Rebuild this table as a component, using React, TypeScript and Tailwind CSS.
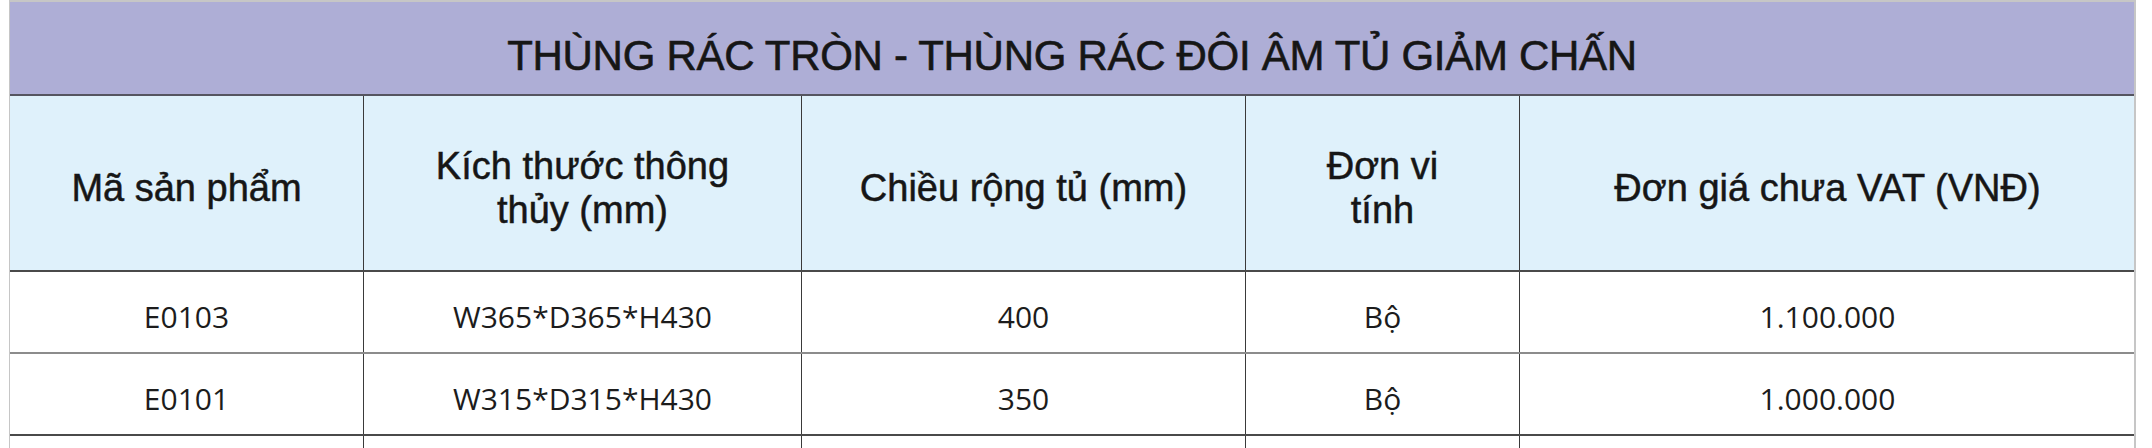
import React from "react";

const cols = "grid grid-cols-[354px_438px_444px_274px_615px]";

const rows = [
  { code: "E0103", size: "W365*D365*H430", width: "400", unit: "Bộ", price: "1.100.000", line: "border-[#8c8c8c]" },
  { code: "E0101", size: "W315*D315*H430", width: "350", unit: "Bộ", price: "1.000.000", line: "border-[#4a4a4a]" },
];

export default function App() {
  const head =
    "flex items-center justify-center text-center text-[38px] leading-[44px] text-[#161616] border-r border-[#3a3a3a] pt-[10px] [-webkit-text-stroke:0.5px_#161616]";
  const cell = "flex items-center justify-center text-[30px] text-[#1c1c1c] border-r border-[#3a3a3a] pt-[9px]";
  return (
    <div className="w-[2152px] h-[448px] bg-white overflow-hidden">
      <div
        className="ml-[9px] w-[2127px] border-t-2 border-l border-r-2 border-[#c6c6c6]"
        style={{ fontFamily: '"Liberation Sans", Arial, sans-serif' }}
      >
        <div className="h-[94px] bg-[#aeaed6] border-b-2 border-[#555560] flex justify-center pt-[33px]">
          <span className="text-[42px] leading-[42px] text-[#161616] tracking-[-0.3px] [-webkit-text-stroke:0.6px_#161616]">
            THÙNG RÁC TRÒN - THÙNG RÁC ĐÔI ÂM TỦ GIẢM CHẤN
          </span>
        </div>
        <div className={`${cols} h-[176px] bg-[#dff1fb] border-b-2 border-[#4a4a4a]`}>
          <div className={head}>Mã sản phẩm</div>
          <div className={head}>
            Kích thước thông
            <br />
            thủy (mm)
          </div>
          <div className={head}>Chiều rộng tủ (mm)</div>
          <div className={head}>
            Đơn vi
            <br />
            tính
          </div>
          <div className={`${head} border-r-0`}>Đơn giá chưa VAT (VNĐ)</div>
        </div>
        {rows.map((r) => (
          <div
            key={r.code}
            className={`${cols} h-[82px] bg-white border-b-2 ${r.line}`}
            style={{ fontFamily: '"Open Sans", "Liberation Sans", sans-serif' }}
          >
            <div className={cell}>{r.code}</div>
            <div className={cell}>{r.size}</div>
            <div className={cell}>{r.width}</div>
            <div className={cell}>{r.unit}</div>
            <div className={`${cell} border-r-0`}>{r.price}</div>
          </div>
        ))}
        <div className={`${cols} h-[40px] bg-white`}>
          <div className="border-r border-[#3a3a3a]" />
          <div className="border-r border-[#3a3a3a]" />
          <div className="border-r border-[#3a3a3a]" />
          <div className="border-r border-[#3a3a3a]" />
          <div />
        </div>
      </div>
    </div>
  );
}
